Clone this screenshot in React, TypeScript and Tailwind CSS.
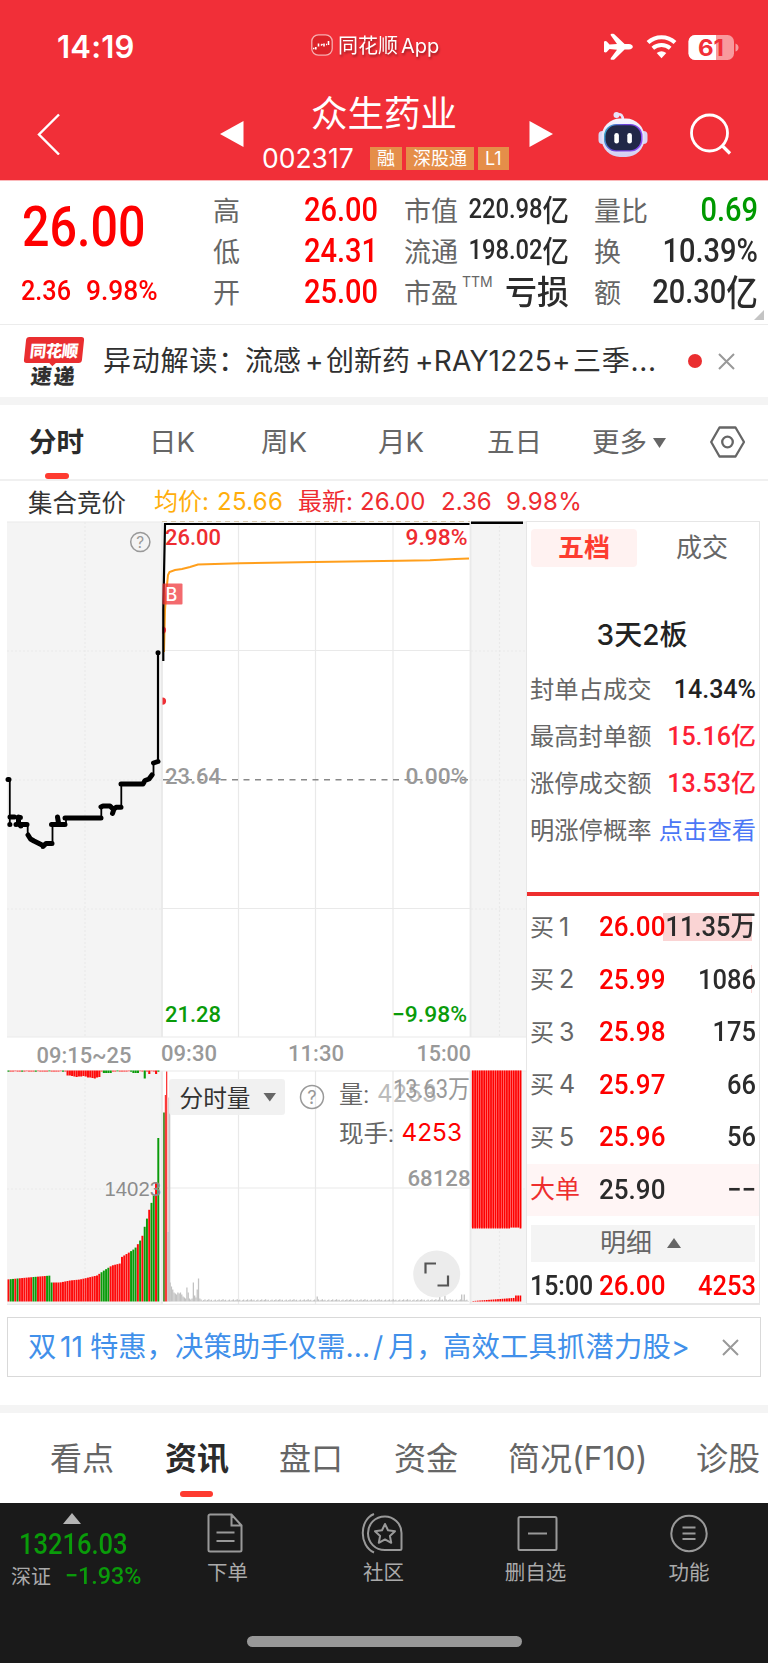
import type { ReactNode } from "react";
import clsx from "clsx";

const DIN = "font-['Roboto','Noto_Sans_CJK_SC',sans-serif] font-medium";
const DIN_FAMILY = "Roboto, 'Noto Sans CJK SC', sans-serif";
const SANS_FAMILY = "Inter, 'Noto Sans CJK SC', sans-serif";

function StatusIcons() {
  return (
    <svg className="h-9 w-[150px]" viewBox="600 27 150 36" fill="none">
      <path
        d="M604 41.500q2-1 3 .3l2.500 2.700 7.500-.6-6.300-8.600q-.6-1.500.9-1.500h1.600q.8 0 1.400.6l10 9.600h4.200q4 .5 4 2.800t-4 2.800h-4.200l-10 9.600q-.6.6-1.400.6h-1.600q-1.500 0-.9-1.500l6.300-8.600-7.500-.6-2.500 2.700q-1 1.300-3 .3z"
        fill="#fff"
      />
      <path d="M648 42.500a20 20 0 0 1 27 0" stroke="#fff" strokeWidth="4.200" />
      <path d="M652.800 48.300a13.500 13.500 0 0 1 17.400 0" stroke="#fff" strokeWidth="4" />
      <path d="M661.500 58.200l-4.800-5.200a8 8 0 0 1 9.600 0z" fill="#fff" />
      <clipPath id="battery">
        <rect x="688.500" y="35" width="45.500" height="25" rx="6.500" />
      </clipPath>
      <g clipPath="url(#battery)">
        <rect x="688" y="35" width="47" height="25" fill="#f89a9d" />
        <rect x="688" y="35" width="28" height="25" fill="#fff" />
      </g>
      <path d="M735.500 43.500q3 1 3 4t-3 4z" fill="#f89a9d" />
      <text x="711" y="55.500" textAnchor="middle" fontFamily={SANS_FAMILY} fontSize="23" fontWeight="700" fill="#f12f38" textLength="26" lengthAdjust="spacingAndGlyphs">
        61
      </text>
    </svg>
  );
}

function Robot() {
  return (
    <svg className="h-[48px] w-[50px]" viewBox="0 0 50 48" fill="none">
      <defs>
        <linearGradient id="shell" x1="0" y1="0" x2="0" y2="1">
          <stop offset="0" stopColor="#f6f5ff" />
          <stop offset="1" stopColor="#d3d0f3" />
        </linearGradient>
        <linearGradient id="visor" x1="0" y1="0" x2="1" y2="0.3">
          <stop offset="0" stopColor="#2dbec8" />
          <stop offset="0.5" stopColor="#6d3fd8" />
          <stop offset="1" stopColor="#8a4df0" />
        </linearGradient>
      </defs>
      <path d="M19 4.500q6-1.500 6 6" stroke="#e7e4fa" strokeWidth="2.600" />
      <circle cx="18.500" cy="5" r="3" fill="#e7e4fa" />
      <rect x="0.500" y="21" width="49" height="13" rx="4" fill="#d9d6f5" />
      <rect x="3.500" y="8.500" width="43" height="38.500" rx="18.500" fill="url(#shell)" />
      <rect x="6" y="14" width="38.500" height="27.500" rx="12" fill="url(#visor)" />
      <rect x="7.500" y="15.300" width="35.500" height="25" rx="11" fill="#212747" />
      <rect x="16.300" y="23" width="4.600" height="10.500" rx="2.300" fill="#fff" />
      <rect x="29.300" y="23" width="4.600" height="10.500" rx="2.300" fill="#fff" />
    </svg>
  );
}

function Badge({ children }: { children: ReactNode }) {
  return (
    <span className="flex h-[23px] items-center justify-center bg-[#e58e49] px-[7px] text-[18px] leading-none">
      {children}
    </span>
  );
}

function Header() {
  return (
    <header className="h-[180px] bg-[#f12f38] text-white">
      <div className="flex h-[89px] items-start pt-[27px]">
        <div className="flex h-[40px] w-[311px] items-center pl-[57px] text-[31px] font-semibold tracking-[0.2px]">
          14:19
        </div>
        <div className="flex h-[36px] w-[289px] items-center gap-[5px]">
          <svg className="size-[22px]" viewBox="0 0 22 22" fill="none">
            <rect x="0.8" y="0.8" width="20.4" height="20.4" rx="6.5" fill="#dc2329" stroke="#f7aeb0" strokeWidth="1.3" />
            <path
              d="M2 14.500h1.500M4.800 15.500V13M7.500 12.500v-3M10 11.500l1.500-1.500M13 12.500V9.500M15 10.500h1M17.500 11V7"
              stroke="#fff"
              strokeWidth="1.600"
            />
          </svg>
          <span className="mt-[1px] text-[20px] whitespace-nowrap drop-shadow-[1px_2px_1px_rgba(0,0,0,0.35)]">
            同花顺<span className="ml-[3px]">App</span>
          </span>
        </div>
        <StatusIcons />
      </div>
      <div className="flex h-[90px] items-center">
        <svg className="ml-[37px] h-[42px] w-[24px]" viewBox="0 0 24 42" fill="none" stroke="#fff" strokeWidth="2.400">
          <path d="M22 1.500L2 21.500l20 20" />
        </svg>
        <svg className="ml-[159px] h-[26px] w-[24px]" viewBox="0 0 24 26" fill="#fff">
          <path d="M0 13L23.500 0v26z" />
        </svg>
        <div className="ml-[18px] flex h-full w-[248px] flex-col">
          <div className="flex h-[50px] items-center justify-center pr-[4px] text-[36.500px] leading-none">众生药业</div>
          <div className="mt-[7px] flex h-[25px] items-center">
            <span className="w-[108px] text-[26.500px] leading-none">002317</span>
            <div className="flex gap-[4px]">
              <Badge>融</Badge>
              <Badge>深股通</Badge>
              <Badge>L1</Badge>
            </div>
          </div>
        </div>
        <svg className="ml-[19px] h-[26px] w-[24px]" viewBox="0 0 24 26" fill="#fff">
          <path d="M24 13L0.500 0v26z" />
        </svg>
        <div className="ml-[45px]">
          <Robot />
        </div>
        <svg className="ml-[42px] h-[42px] w-[42px]" viewBox="0 0 42 42" fill="none" stroke="#fff" strokeWidth="2.800">
          <circle cx="19.500" cy="20" r="18" />
          <path d="M32 32.500l8 8" strokeWidth="3.200" />
        </svg>
      </div>
    </header>
  );
}

function StatRow({ label, value, color = "text-[#2b2b2b]", size = "text-[33px]" }: {
  label: ReactNode;
  value: ReactNode;
  color?: string;
  size?: string;
}) {
  return (
    <div className="flex h-[41px] items-center justify-between">
      <span className="flex shrink-0 pt-[4px] text-[27px] leading-none whitespace-nowrap text-[#666]">{label}</span>
      <span className={clsx(DIN, "flex w-0 flex-1 origin-right scale-x-[.88] items-center justify-end leading-none whitespace-nowrap", size, color)}>
        {value}
      </span>
    </div>
  );
}

function Yi({ className }: { className: string }) {
  return <span className={clsx("-mt-[4px] font-['Noto_Sans_CJK_SC'] leading-none", className)}>亿</span>;
}

function QuotePanel() {
  return (
    <section className="relative flex h-[145px] border-t border-b border-t-[#fbb9bb] border-b-[#ececec] bg-white">
      <div className={clsx(DIN, "w-[213px] pt-[19px] text-[#fe0000]")}>
        <div className="ml-[22px] origin-left scale-x-[.88] text-[55px] leading-[54px]">26.00</div>
        <div className="mt-[21px] ml-[21px] flex text-[28px] leading-8">
          <span className="w-[65px] origin-left scale-x-[.9]">2.36</span>
          <span className="origin-left scale-x-[.94]">9.98%</span>
        </div>
      </div>
      <div className="w-[165px] pt-[8px]">
        <StatRow label="高" value="26.00" color="text-[#fe0000]" />
        <StatRow label="低" value="24.31" color="text-[#fe0000]" />
        <StatRow label="开" value="25.00" color="text-[#fe0000]" />
      </div>
      <div className="ml-[26px] w-[165px] pt-[8px]">
        <StatRow label="市值" value={<>220.98<Yi className="text-[30px]" /></>} size="text-[27px]" />
        <StatRow label="流通" value={<>198.02<Yi className="text-[30px]" /></>} size="text-[27px]" />
        <StatRow
          label={<>市盈<span className="-mt-[5px] ml-[4px] w-0 text-[14px] leading-none">TTM</span></>}
          value={<span className="-mt-[2px] origin-right scale-x-[1.1] font-['Noto_Sans_CJK_SC']">亏损</span>}
        />
      </div>
      <div className="ml-[25px] w-[164px] pt-[8px]">
        <StatRow label="量比" value="0.69" color="text-[#009900]" />
        <StatRow label="换" value="10.39%" />
        <StatRow label="额" value={<>20.30<Yi className="text-[36px]" /></>} />
      </div>
      <svg className="absolute right-[4px] bottom-[4px] size-[10px]" viewBox="0 0 10 10" fill="#c4c4c4">
        <path d="M10 0v10H0z" />
      </svg>
    </section>
  );
}

function CloseIcon() {
  return (
    <svg className="size-[17px]" viewBox="0 0 17 17" stroke="#999" strokeWidth="2" fill="none">
      <path d="M1 1l15 15M16 1L1 16" />
    </svg>
  );
}

function NewsBar() {
  return (
    <section className="flex h-[72px] items-center text-[28px] leading-none text-[#303030]">
      <div className="ml-[25px] w-[78px] font-['Noto_Sans_CJK_SC'] font-black">
        <div className="relative flex h-[26px] w-[58px] -skew-x-6 items-center justify-center rounded-[3px] bg-[#ea2e30] text-[16.500px] tracking-[-0.5px] text-white">
          同花顺
          <span className="absolute -bottom-[2px] left-[26px] size-[6px] rotate-45 bg-[#ea2e30]" />
        </div>
        <div className="mt-[2px] ml-[6px] w-[50px] -skew-x-6 text-[21px] tracking-[2px]">速递</div>
      </div>
      <span className="w-[142px] tracking-[0.8px] whitespace-nowrap">异动解读：</span>
      <span className="w-[60px]">流感</span>
      <span className="w-[21px]">+</span>
      <span className="w-[89px]">创新药</span>
      <span className="w-[158px] tracking-[0.2px] whitespace-nowrap">+RAY1225+</span>
      <span className="w-[115px] tracking-[0.7px] whitespace-nowrap">三季...</span>
      <span className="size-[14px] rounded-full bg-[#ea2e30]" />
      <span className="ml-[16px]">
        <CloseIcon />
      </span>
    </section>
  );
}

function PeriodTabs() {
  return (
    <nav className="flex h-[76px] items-center border-b-2 border-[#f0f0f0] pt-[2px] text-[27.500px] leading-none text-[#666]">
      <div className="relative ml-[29px] flex h-full w-[120px] items-center font-bold text-[#2b2b2b]">
        分时
        <span className="absolute bottom-0 left-[16px] h-[6px] w-[24px] rounded-[3px] bg-[#fe3b30]" />
      </div>
      <span className="w-[112px]">日K</span>
      <span className="w-[117px]">周K</span>
      <span className="w-[109px]">月K</span>
      <span className="w-[105px]">五日</span>
      <span className="flex w-[118px] items-center gap-[6px]">
        更多
        <svg className="h-[10px] w-[13px]" viewBox="0 0 13 10" fill="#666">
          <path d="M0 0h13L6.500 10z" />
        </svg>
      </span>
      <svg className="-mt-[3px] h-[32px] w-[35px]" viewBox="0 0 35 32" fill="none" stroke="#666" strokeWidth="2.300">
        <path d="M9.500 1.500h16L34 16l-8.500 14.500h-16L1.200 16z" strokeLinejoin="round" />
        <circle cx="17.500" cy="16" r="5.300" />
      </svg>
    </nav>
  );
}

function Legend() {
  return (
    <div className="flex h-[41px] items-center text-[24px] leading-none whitespace-nowrap text-[#ee2c31]">
      <span className="ml-[28px] w-[126px] pt-[3px] text-[24.500px] text-[#333]">集合竞价</span>
      <span className="w-[63px] text-[#ffae0c]">均价:</span>
      <span className="w-[81px] tracking-[0.3px] text-[#ffae0c]">25.66</span>
      <span className="w-[62px]">最新:</span>
      <span className="w-[81px]">26.00</span>
      <span className="w-[65px]">2.36</span>
      <span className="tracking-[0.4px]">9.98%</span>
    </div>
  );
}

// [x, height] knots of the opening auction volume curve
const AUCTION_CURVE: [number, number][] = [
  [7, 22], [28, 24], [51, 26], [51.500, 19], [60, 19], [70, 21], [80, 22], [97, 26], [104, 31],
  [112, 36], [120, 38], [121, 44], [129, 49], [135, 53], [139, 59], [142, 64], [144.500, 74], [147, 83],
  [149, 91], [151, 97], [153.500, 105], [156, 114], [156.500, 163.500], [160, 163.500],
];

const AUCTION_GREEN: [number, number][] = [
  [10.500, 15], [17, 19.500], [33, 38], [45, 52.500], [101.500, 110.500], [122.500, 124], [129, 136], [138, 140.500],
  [143, 147.500], [149.500, 154], [156.500, 160],
];

function curveAt(x: number) {
  const i = AUCTION_CURVE.findIndex(([kx]) => kx >= x);
  if (i <= 0) return AUCTION_CURVE[0][1];
  const [x0, h0] = AUCTION_CURVE[i - 1];
  const [x1, h1] = AUCTION_CURVE[i];
  return h0 + ((h1 - h0) * (x - x0)) / (x1 - x0);
}

const auctionBars = Array.from({ length: 67 }, (_, i) => {
  const x = 7.500 + i * 2.270;
  const green = AUCTION_GREEN.some(([a, b]) => x + 1 >= a && x + 1 < b);
  return { x, h: curveAt(x + 1), fill: green ? "#0a9b0a" : "#fe0a0a" };
});

const unmatchedBars = auctionBars.map(({ x }, i) => {
  if (x > 64.500 && x < 99) return { x, h: [5, 5, 5.500, 6, 6.500, 6, 6, 5.500, 6, 7, 7, 7.500, 8, 7, 6.500, 6][i - 26] ?? 6, fill: "#fe0a0a" };
  if (x > 102 && x < 111) return { x, h: 2.500, fill: "#0a9b0a" };
  if (x > 131 && x < 137) return { x, h: 2.500, fill: "#0a9b0a" };
  if (x > 142.500 && x < 144.900) return { x, h: 8, fill: "#0a9b0a" };
  if (i === 62 || i === 65) return { x, h: 3.500, fill: "#fe0a0a" };
  return { x, h: i % 5 === 3 ? 0.800 : 1.200, fill: i % 6 === 0 ? "#0a9b0a" : "#fe5050" };
});

const EARLY = [19, 15, 12, 9, 8, 7, 9, 8, 9, 7, 5, 4, 3, 14, 9, 3, 2, 3, 19, 6, 4, 12, 23, 3, 2];

const sessionBars = Array.from({ length: 232 }, (_, i) => {
  const x = 169.500 + i * 1.290;
  let h = EARLY[i] ?? 0.600 + ((i * 37) % 11) / 6;
  if (i === 114) h = 5;
  if (i === 209) h = 12;
  if (i === 213) h = 6;
  if (i === 226 || i === 228) h = 7;
  return { x, h };
});

function Label({ x, y, w, fill, size = 22.500, weight = 500, family = DIN_FAMILY, children }: {
  x: number;
  y: number;
  w: number;
  fill: string;
  size?: number;
  weight?: number;
  family?: string;
  children: string;
}) {
  return (
    <text x={x} y={y} textLength={w} lengthAdjust="spacingAndGlyphs" fill={fill} fontSize={size} fontWeight={weight} fontFamily={family}>
      {children}
    </text>
  );
}

function Help({ x, y, r }: { x: number; y: number; r: number }) {
  return (
    <g>
      <circle cx={x} cy={y} r={r} fill="none" stroke="#999" strokeWidth="1.500" />
      <text x={x} y={y + r * 0.6} textAnchor="middle" fontFamily={SANS_FAMILY} fontSize={r * 1.6} fill="#999">
        ?
      </text>
    </g>
  );
}

function Charts() {
  const grid = [238.500, 315.500, 393];
  return (
    <svg className="h-[784px] w-[526px] shrink-0" viewBox="0 521 526 784" fill="none">
      {/* backgrounds */}
      <path d="M7 522h155v515H7zM471 522h55v515h-55zM7 1071h155v234H7zM471 1071h55v234h-55z" fill="#f4f4f4" />
      <g stroke="#e9e9e9" strokeWidth="1.200">
        <path d="M7 522H526M162 650.500H470M162 908.500H470M7 1037H526M7 1071H526M162 1188H470M7 1304.300H526" />
        <path d="M162 522V1037M162 1071V1304M470.500 522V1037M470.500 1071V1304" strokeWidth="1.800" />
        {grid.map((x) => (
          <path key={x} d={`M${x} 522V1037M${x} 1071V1304`} />
        ))}
        <path
          d="M85 522V1037M85 1071V1304M499.500 522V1037M499.500 1071V1304M7 651H162M471 651H526M7 780H162M471 780H526M7 909H162M471 909H526M7 1189H162M471 1189H526"
          strokeDasharray="2 2"
        />
      </g>
      <path d="M162 521.500H470" stroke="#d8c9ae" strokeDasharray="5 4" />
      <path d="M163 779.800H470" stroke="#888" strokeWidth="1.500" strokeDasharray="6 5.500" />

      {/* axis labels */}
      <Label x={165} y={545} w={56} fill="#ee2c31">26.00</Label>
      <Label x={405.500} y={545} w={62} fill="#ee2c31">9.98%</Label>
      <Label x={165} y={784} w={56} fill="#999">23.64</Label>
      <Label x={405.500} y={784} w={62} fill="#999">0.00%</Label>
      <Label x={165} y={1022} w={56} fill="#0a9b0a">21.28</Label>
      <Label x={392} y={1022} w={75} fill="#0a9b0a">−9.98%</Label>
      <Label x={36.500} y={1062.500} w={95} fill="#999">09:15~25</Label>
      <Label x={161} y={1061} w={56} fill="#999">09:30</Label>
      <Label x={288} y={1061} w={56} fill="#999">11:30</Label>
      <Label x={416.500} y={1061} w={54.500} fill="#999">15:00</Label>
      <Help x={140.300} y={542} r={9.600} />

      {/* average price */}
      <path
        d="M164 652L165 610L166.500 590L168 575L169.500 572L175 570L182 569L190 567L198 564.500L240 563.300L315 562L400 560.700L430 560.300L440 559.800L455 559L469 558.500"
        stroke="#ff9f1c"
        strokeWidth="2"
      />
      <path d="M162.500 626.500a3.600 3.600 0 0 1 0 7.200zM162.500 697.500a3.600 3.600 0 0 1 0 7.200z" fill="#ee3036" />
      {/* price */}
      <path d="M163.300 661V610L165 524H469.500" stroke="#000" strokeWidth="2.200" />
      <path d="M471 522.800H523" stroke="#000" strokeWidth="2.600" />
      <path
        d="M9.800 779V824M16.500 824L18.500 817M27.700 824V835M52.500 843V824M66 824V818M101.300 818V807M121.300 807V784M153.500 775V763"
        stroke="#000"
        strokeWidth="1.800"
      />
      <path d="M158 762V653" stroke="#000" strokeWidth="2.200" />
      <path
        d="M8 779.500h1M9.800 824.500h.1M10 817H14.500M16 824.500h.1M18.500 817v7.500M20.300 817.500h.1M20.800 826V824.500H27M28 835L30.500 839L34 841L38 843L43 845.500V846.500L46 843.500H52M51.500 824.500H65M57.500 817L58.500 823M65 818H101M101 807L103 806H110L112 808M112.500 813.500L114 809L116 807.300H121M121 784H143L145 780.500L149 779L152 775M153.500 763L158 761.500M158 652.700h.1"
        stroke="#000"
        strokeWidth="5"
        strokeLinecap="round"
        strokeLinejoin="round"
      />
      <rect x="162.500" y="583.500" width="20" height="21" rx="1" fill="#ee3036" fillOpacity="0.720" />
      <text x="165.500" y="600.500" fontFamily={SANS_FAMILY} fontSize="18" fontWeight="500" fill="#fff">
        B
      </text>

      {/* volume */}
      {auctionBars.map(({ x, h, fill }) => (
        <rect key={x} x={x} y={1301.500 - h} width="1.950" height={h} fill={fill} />
      ))}
      {unmatchedBars.map(({ x, h, fill }) => (
        <rect key={x} x={x} y="1070.500" width="2.100" height={h} fill={fill} />
      ))}
      <Label x={104.500} y={1196} w={56.500} fill="#8c8c8c" size={20} weight={400} family="'Liberation Sans', sans-serif">
        14023
      </Label>
      <path d="M163 1112.500h2v189h-2z" fill="#4f9a3a" />
      <path d="M164.800 1095h1.400v206.500h-1.400zM166 1071.500h1.300v230H166z" fill="#fb3a3a" />
      <path d="M168.300 1097.500h2v204h-2zM167.300 1232h1.500v69.500h-1.500z" fill="#c6c6c6" />
      {sessionBars.map(({ x, h }) => (
        <rect key={x} x={x} y={1301.500 - h} width="1.290" height={h} fill="#c2c2c2" />
      ))}
      <rect x="471.500" y="1070.500" width="50" height="157" fill="#ffa0a0" />
      {Array.from({ length: 22 }, (_, i) => (
        <g key={i} fill="#fe0000">
          <rect x={472 + i * 2.270} y="1070.500" width="1.700" height={i > 16 && i < 21 ? 157 : 158} />
          <rect x={472.500 + i * 2.240} y={1301.500 - (i > 18 ? 6 : 0.500 + i * 0.170)} width="1.700" height={i > 18 ? 6 : 0.500 + i * 0.170} />
        </g>
      ))}

      <rect x="169" y="1079" width="116" height="36" rx="3" fill="#f0f0f0" fillOpacity="0.920" />
      <Label x={179.500} y={1106.500} w={71} fill="#333" size={23.500} weight={400}>分时量</Label>
      <path d="M263.500 1093h12.500l-6.200 8.500z" fill="#666" />
      <Help x={312} y={1097} r={11.500} />
      <Label x={339} y={1102.500} w={30} fill="#666" size={23.500} weight={400}>量:</Label>
      <Label x={377} y={1102} w={60} fill="#bbb" size={24} weight={400} family={SANS_FAMILY}>4253</Label>
      <Label x={393} y={1098} w={77} fill="#999" size={25} weight={400}>13.63万</Label>
      <Label x={339} y={1141.500} w={55} fill="#666" size={23.500} weight={400}>现手:</Label>
      <Label x={401.500} y={1140.500} w={60.500} fill="#fe0000" size={24} weight={400} family={SANS_FAMILY}>4253</Label>
      <Label x={407.500} y={1186} w={63} fill="#999">68128</Label>

      <circle cx="436.700" cy="1274" r="23.500" fill="#ececec" />
      <path d="M425.500 1273.500V1263.500H436M437.500 1285.500H448V1275.500" stroke="#555" strokeWidth="2.200" />
    </svg>
  );
}

const SEAL_STATS = [
  { label: "封单占成交", value: "14.34%", color: "text-[#222]" },
  { label: "最高封单额", value: "15.16亿", color: "text-[#fd2135]" },
  { label: "涨停成交额", value: "13.53亿", color: "text-[#fd2135]" },
];

const BIDS = [
  { level: "1", price: "26.00", qty: "11.35万" },
  { level: "2", price: "25.99", qty: "1086" },
  { level: "3", price: "25.98", qty: "175" },
  { level: "4", price: "25.97", qty: "66" },
  { level: "5", price: "25.96", qty: "56" },
];

function BookRow({ label, price, qty, priceClass, qtyClass = "text-[#2b2b2b]", className }: {
  label: ReactNode;
  price: string;
  qty: string;
  priceClass: string;
  qtyClass?: string;
  className?: string;
}) {
  return (
    <div className={clsx("relative flex shrink-0 items-center px-[3px] leading-none", className)}>
      <span className="w-[69px] shrink-0 text-[24px] whitespace-nowrap text-[#666]">{label}</span>
      <span className={clsx(DIN, "w-[70px] shrink-0 origin-left scale-x-[.93] text-[28px]", priceClass)}>{price}</span>
      <span className={clsx(DIN, "flex w-0 flex-1 origin-right scale-x-[.91] justify-end text-[28px] whitespace-nowrap", qtyClass)}>{qty}</span>
    </div>
  );
}

function OrderBook() {
  return (
    <aside className="flex h-[784px] w-[234px] flex-col border border-b-2 border-[#e6e6e6]">
      <div className="mx-[4px] mt-[7px] flex h-[38px] shrink-0 text-[26px] leading-none text-[#666]">
        <span className="flex w-[106px] items-center justify-center rounded-[4px] bg-[#fff2f1] font-bold text-[#fd3c30]">五档</span>
        <span className="flex flex-1 items-center justify-center pl-[12px]">成交</span>
      </div>
      <div className="mt-[53px] h-[32px] shrink-0 pr-[2px] text-center text-[28px] leading-[31px] font-medium text-[#222]">3天2板</div>
      <div className="mt-[14px] shrink-0 pr-[3px] pl-[3px] text-[24.300px] leading-none text-[#666]">
        {SEAL_STATS.map(({ label, value, color }) => (
          <div key={label} className="flex h-[47px] items-center justify-between whitespace-nowrap">
            <span>{label}</span>
            <span className={clsx(DIN, "origin-right text-[25px]", color)}>{value}</span>
          </div>
        ))}
        <div className="flex h-[47px] items-center justify-between whitespace-nowrap">
          <span>明涨停概率</span>
          <span className="text-[#4b76f6]">点击查看</span>
        </div>
      </div>
      <div className="mt-[38px] h-[4px] shrink-0 bg-[#ee2e2e]" />
      <div className="relative shrink-0 pt-[5px]">
        <span className="absolute top-[17px] right-[7px] h-[28px] w-[89px] bg-[#fad4d4]" />
        <span className="absolute top-[69px] right-[7px] h-[28px] w-px bg-[#fad4d4]" />
        {BIDS.map(({ level, price, qty }) => (
          <BookRow
            key={level}
            className="h-[52.500px]"
            label={<>买<span className="ml-[5px] text-[25px]">{level}</span></>}
            price={price}
            qty={qty}
            priceClass="text-[#fe0000]"
          />
        ))}
      </div>
      <BookRow
        className="h-[52px] bg-[#fff5f5]"
        label={<span className="text-[25px] text-[#ee2e2e]">大单</span>}
        price="25.90"
        qty="−−"
        priceClass="text-[#2b2b2b]"
      />
      <div className="mx-[4px] mt-[9px] flex h-[37px] shrink-0 items-center justify-center gap-[15px] bg-[#f4f4f4] pr-[5px] text-[26px] leading-none text-[#666]">
        明细
        <svg className="h-[10px] w-[14px]" viewBox="0 0 14 10" fill="#666">
          <path d="M0 10h14L7 0z" />
        </svg>
      </div>
      <BookRow
        className="h-[40px] pt-[9px]"
        label={<span className={clsx(DIN, "inline-block origin-left scale-x-[.89] text-[28px] text-[#2b2b2b]")}>15:00</span>}
        price="26.00"
        qty="4253"
        priceClass="text-[#fe0000]"
        qtyClass="text-[#fe0000]"
      />
    </aside>
  );
}

function AdBar() {
  return (
    <div className="mx-[7px] mt-[12px] flex h-[60px] items-center border-[1.500px] border-[#d9d9d9] pt-[1px] pl-[20px] text-[28.300px] leading-none whitespace-nowrap text-[#4190ea]">
      <span className="w-[32px]">双</span>
      <span className="w-[30px]">11</span>
      <span className="w-[85px]">特惠，</span>
      <span className="w-[198px] tracking-[0.1px]">决策助手仅需...</span>
      <span className="w-[15px]">/</span>
      <span className="w-[55px]">月，</span>
      <span className="w-[279px] tracking-[0.2px]">高效工具抓潜力股&gt;</span>
      <CloseIcon />
    </div>
  );
}

function InfoTabs() {
  return (
    <nav className="flex h-[90px] items-center overflow-hidden pt-[2px] text-[32px] leading-none whitespace-nowrap text-[#666]">
      <span className="ml-[50px] w-[115px] shrink-0">看点</span>
      <div className="relative flex h-full w-[114px] shrink-0 items-center font-bold text-[#2b2b2b]">
        资讯
        <span className="absolute bottom-[6px] left-[15px] h-[6px] w-[33px] rounded-[3px] bg-[#fe3b30]" />
      </div>
      <span className="w-[115px] shrink-0">盘口</span>
      <span className="w-[114px] shrink-0">资金</span>
      <span className="w-[188px] shrink-0">简况(F10)</span>
      <span className="shrink-0">诊股</span>
    </nav>
  );
}

const ACTIONS = [
  {
    label: "下单",
    width: "w-[157px]",
    icon: <path d="M24.500 1.500H6a1.500 1.500 0 0 0-1.500 1.500V37A1.500 1.500 0 0 0 6 38.500H36A1.500 1.500 0 0 0 37.500 37V12.500L27.500 1.500H24.500M27.500 2V12.500H37M12.500 19.500H30.500M12.500 28H30.500" />,
  },
  {
    label: "社区",
    width: "w-[155px]",
    icon: (
      <>
        <path d="M14 1C-1 7-1 33 14 39.500M25 3.500C33 3.500 41.500 10 41.500 20V35.500A1.500 1.500 0 0 1 40 37H25C15 37 8 29.500 8 20.200S15 3.500 25 3.500z" />
        <path d="M25 11l3 6.300 7 .9-5.100 4.700 1.300 6.900-6.200-3.400-6.200 3.400 1.300-6.900-5.100-4.700 7-.9z" strokeLinejoin="round" />
      </>
    ),
  },
  {
    label: "删自选",
    width: "w-[149px]",
    icon: (
      <>
        <rect x="6.500" y="4" width="38" height="33" rx="1.500" />
        <path d="M16 20.500H35" />
      </>
    ),
  },
  {
    label: "功能",
    width: "w-[158px]",
    icon: (
      <>
        <circle cx="24" cy="20.500" r="17.700" />
        <path d="M17.500 14.500H30.500M17.500 20.500H30.500M17.500 26H30.500" />
      </>
    ),
  },
];

function BottomBar() {
  return (
    <footer className="h-[160px] overflow-hidden bg-[#1a1a1a] text-[#aaa]">
      <div className="flex h-[133px] items-start pt-[10px]">
        <div className="w-[149px] shrink-0">
          <svg className="ml-[63px] h-[11px] w-[18px]" viewBox="0 0 18 11" fill="#b4b4b4">
            <path d="M0 11h18L9 0z" />
          </svg>
          <div className={clsx(DIN, "mt-[5px] ml-[19px] h-[30px] origin-left scale-x-[.88] text-[29px] leading-[30px] text-[#0a9b0a]")}>
            13216.03
          </div>
          <div className="mt-[5px] ml-[11px] flex h-[24px] items-center leading-none">
            <span className="w-[54px] shrink-0 pt-[1px] text-[20px]">深证</span>
            <span className={clsx(DIN, "origin-left scale-x-[.95] text-[24.500px] text-[#0a9b0a]")}>−1.93%</span>
          </div>
        </div>
        {ACTIONS.map(({ label, width, icon }) => (
          <div key={label} className={clsx("flex shrink-0 flex-col items-center", width)}>
            <svg className="h-[41px] w-[48px]" viewBox="0 0 48 41" fill="none" stroke="#999" strokeWidth="2">
              {icon}
            </svg>
            <span className="mt-[9px] text-[20.500px] leading-none">{label}</span>
          </div>
        ))}
      </div>
      <div className="mx-auto h-[11px] w-[275px] rounded-full bg-[#989898]" />
    </footer>
  );
}

export default function App() {
  return (
    <div className="w-[768px] overflow-hidden bg-white font-['Inter','Noto_Sans_CJK_SC',sans-serif]">
      <Header />
      <QuotePanel />
      <NewsBar />
      <div className="h-[8px] bg-[#f4f4f4]" />
      <PeriodTabs />
      <Legend />
      <div className="-mt-px flex h-[784px]">
        <Charts />
        <OrderBook />
      </div>
      <AdBar />
      <div className="mt-[28px] h-[8px] bg-[#f4f4f4]" />
      <InfoTabs />
      <BottomBar />
    </div>
  );
}
